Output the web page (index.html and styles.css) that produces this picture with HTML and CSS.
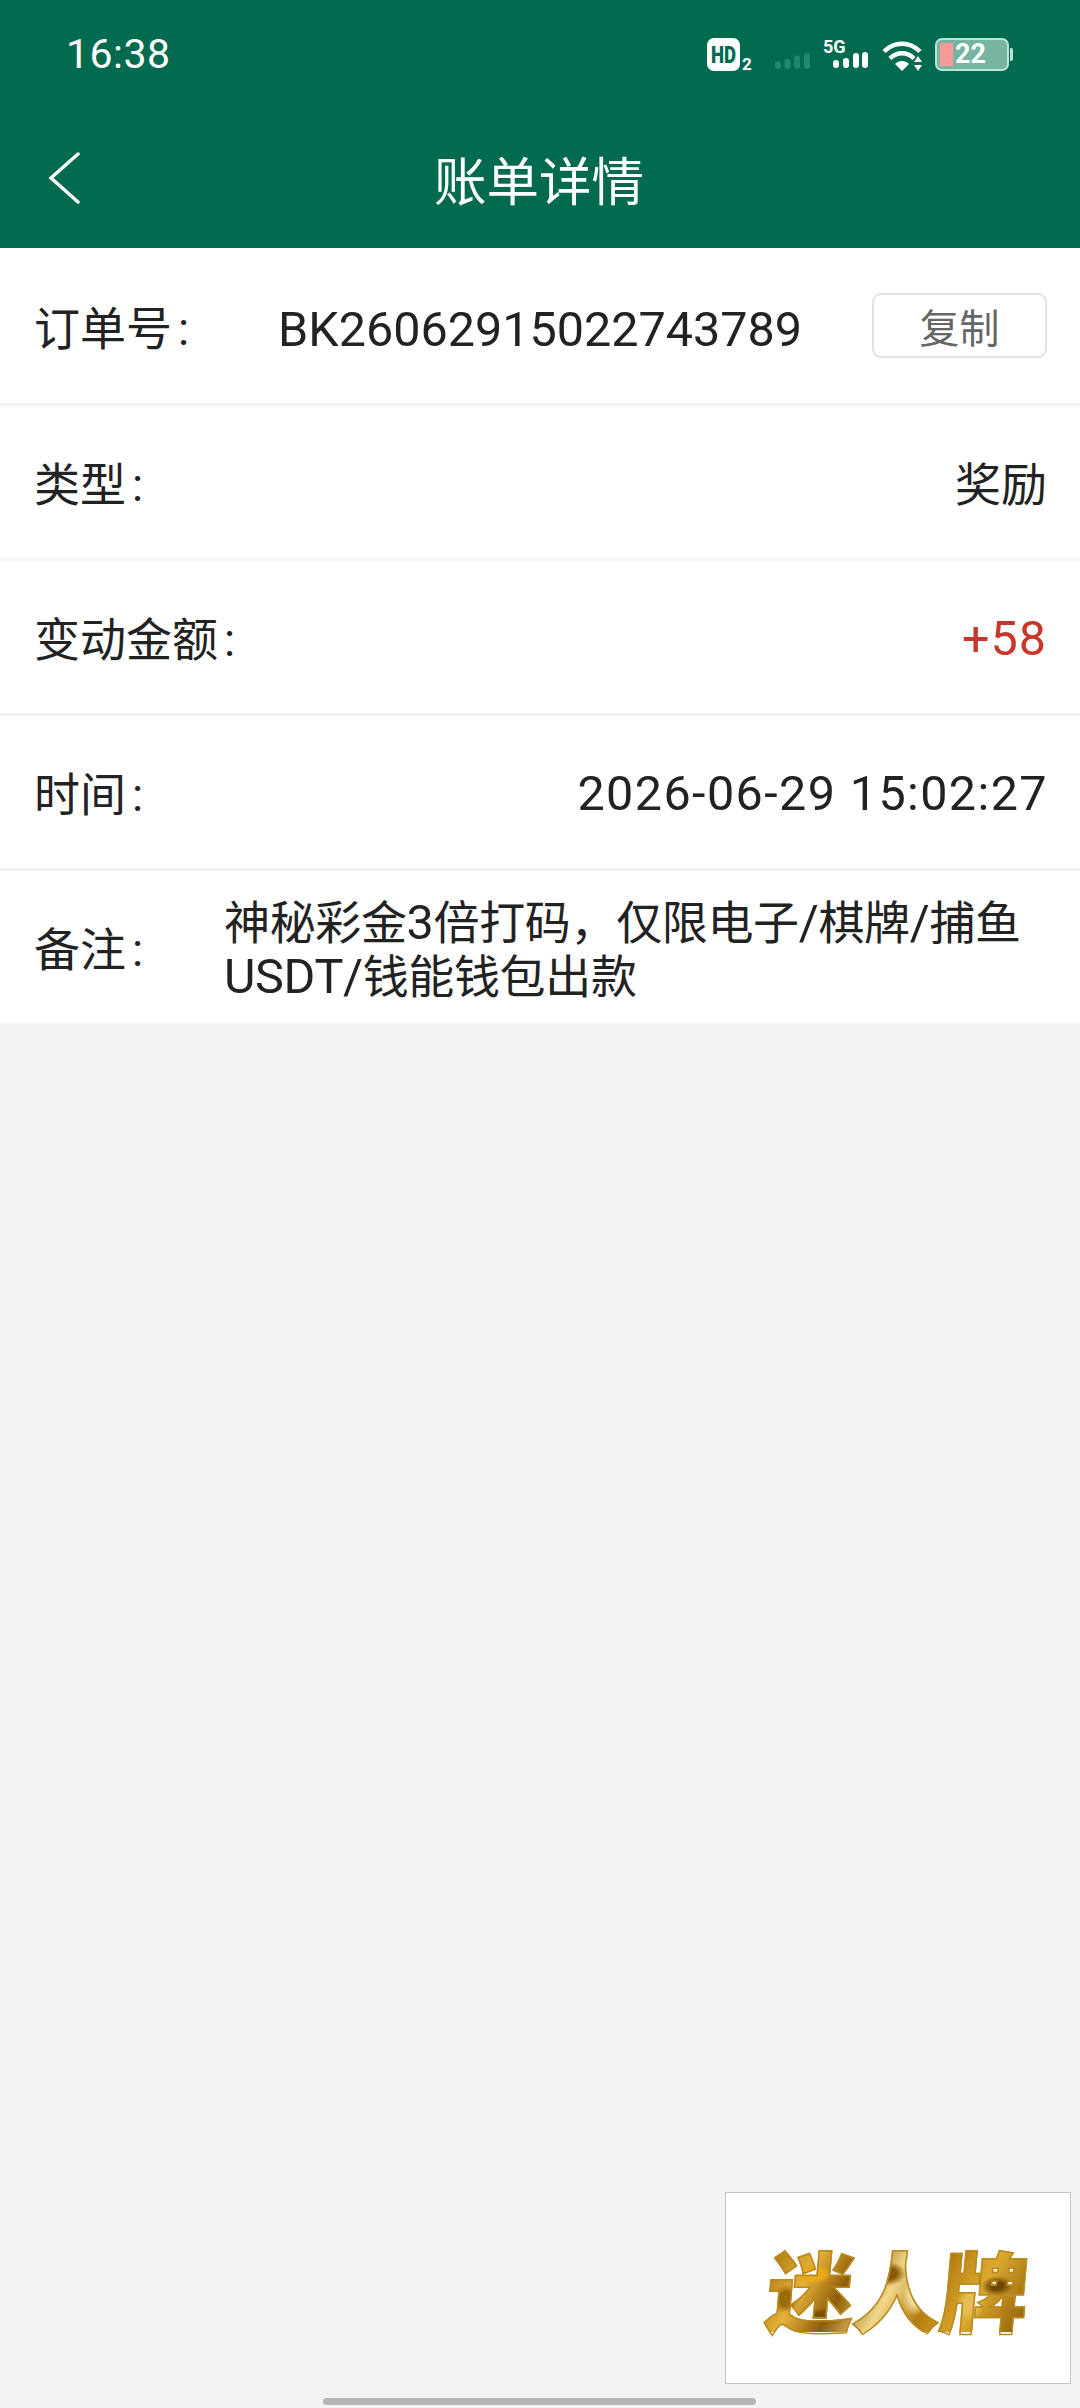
FILE: index.html
```html
<!DOCTYPE html>
<html lang="zh-CN">
<head>
<meta charset="utf-8">
<title>账单详情</title>
<link rel="stylesheet" href="styles.css">
</head>
<body>
<div class="page">
  <header class="header">
    <div class="status">
      <span class="clock">16:38</span>
      <div class="status-icons">
        <svg class="ic ic-hd" width="46" height="33" viewBox="0 0 46 33">
          <rect x="0" y="0" width="33" height="33" rx="7" fill="#fff"/>
          <text x="4" y="25" class="hd-text" textLength="25" lengthAdjust="spacingAndGlyphs">HD</text>
          <text x="35" y="32" class="hd-two">2</text>
        </svg>
        <svg class="ic ic-sig-dim" width="35" height="16" viewBox="0 0 35 16">
          <rect x="0" y="8" width="6" height="8" rx="3" fill="#1f8a6b"/>
          <rect x="9.500" y="5.500" width="6" height="10.500" rx="3" fill="#1f8a6b"/>
          <rect x="19" y="2.500" width="6" height="13.500" rx="3" fill="#1f8a6b"/>
          <rect x="29" y="0" width="6" height="16" rx="3" fill="#1f8a6b"/>
        </svg>
        <svg class="ic ic-5g" width="45" height="28" viewBox="0 0 45 28">
          <text x="0" y="13" class="five-g">5G</text>
          <rect x="10" y="20" width="6" height="8" rx="3" fill="#fff"/>
          <rect x="20" y="18" width="6" height="10" rx="3" fill="#fff"/>
          <rect x="30" y="13" width="6" height="15" rx="3" fill="#fff"/>
          <rect x="39" y="12" width="6" height="16" rx="3" fill="#fff"/>
        </svg>
        <svg class="ic ic-wifi" width="40" height="30" viewBox="0 0 40 30">
          <path d="M2 10.500C12 0 28 0 38 10.500" stroke="#fff" stroke-width="4.500" fill="none"/>
          <path d="M8 17.500C15 10.500 25 10.500 32 17.500" stroke="#fff" stroke-width="4.500" fill="none"/>
          <path d="M13 23C17 19 23 19 27 23L20 30z" fill="#fff"/>
          <path d="M36 15l4 6h-8zM36 30l-4-6h8z" fill="#fff"/>
        </svg>
        <div class="battery">
          <div class="battery-body">
            <span class="battery-low"></span>
            <span class="battery-num">22</span>
          </div>
          <span class="battery-cap"></span>
        </div>
      </div>
    </div>
    <div class="navbar">
      <svg class="back" width="33" height="54" viewBox="0 0 33 54">
        <path d="M30 2L3 26l27 24" stroke="#fff" stroke-width="3.400" fill="none" stroke-linecap="round"/>
      </svg>
      <h1 class="title">账单详情</h1>
    </div>
  </header>

  <section class="list">
    <div class="row row-first">
      <span class="label label-order">订单号<span class="colon">:</span></span>
      <span class="order-no">BK26062915022743789</span>
      <button class="copy">复制</button>
    </div>
    <div class="row">
      <span class="label">类型<span class="colon">:</span></span>
      <span class="value cjk">奖励</span>
    </div>
    <div class="row">
      <span class="label">变动金额<span class="colon">:</span></span>
      <span class="value lat amount">+58</span>
    </div>
    <div class="row">
      <span class="label">时间<span class="colon">:</span></span>
      <span class="value lat date">2026-06-29 15:02:27</span>
    </div>
    <div class="row row-note">
      <span class="label label-note">备注<span class="colon">:</span></span>
      <span class="note">神秘彩金<span class="lat">3</span>倍打码&#65292;仅限电子<span class="lat">/</span>棋牌<span class="lat">/</span>捕鱼<br><span class="lat">USDT/</span>钱能钱包出款</span>
    </div>
  </section>

  <div class="logo-box"><span class="logo-text">迷人牌</span></div>
  <div class="home-bar"></div>
</div>
</body>
</html>
```

FILE: styles.css
```css
* { box-sizing: border-box; }
html, body { margin: 0; padding: 0; }
body {
  width: 1080px;
  height: 2408px;
  overflow: hidden;
  background: #f3f3f3;
  font-family: "Roboto", "Noto Sans CJK SC", sans-serif;
  color: #222;
}
.page { position: relative; width: 1080px; height: 2408px; }

.header { height: 248px; background: #026a4e; color: #fff; display: flex; flex-direction: column; }
.status { height: 108px; padding: 31px 67px 0 66px; display: flex; justify-content: space-between; align-items: flex-start; }
.clock { font-size: 41px; line-height: 46px; font-weight: 400; letter-spacing: 0.5px; }
.status-icons { display: flex; align-items: flex-start; height: 40px; }
.ic { overflow: visible; flex: none; }
.ic-hd { margin-top: 7px; }
.ic-sig-dim { margin: 22px 0 0 22px; }
.ic-5g { margin: 9px 0 0 13px; }
.ic-wifi { margin: 10px 0 0 14px; }
.hd-text { font: 900 23px "Roboto", sans-serif; fill: #026a4e; }
.hd-two { font: 700 17px "Roboto", sans-serif; fill: #fff; }
.five-g { font: 700 18px "Roboto", sans-serif; fill: #fff; }
.battery { display: flex; align-items: center; margin: 7px 0 0 13px; }
.battery-body { width: 74px; height: 33px; padding-left: 3px; border: 2px solid #b9e4d6; border-radius: 7px; background: #76b5a1; display: flex; align-items: center; }
.battery-low { width: 13px; height: 23px; background: #fb9a99; }
.battery-num { margin-left: 2px; font: 700 27px/29px "Roboto", sans-serif; color: #fff; }
.battery-cap { width: 3px; height: 13px; background: #b9e4d6; margin-left: 1px; border-radius: 0 2px 2px 0; }

.navbar { position: relative; flex: 1; display: flex; align-items: center; justify-content: center; }
.back { position: absolute; left: 48px; top: 44px; }
.title { margin: 0 0 0 -2px; font-size: 52.500px; line-height: 60px; font-weight: 400; position: relative; top: 5px; }

.list { background: #fff; }
.row {
  height: 155px;
  padding: 0 33px 0 34px;
  display: flex;
  align-items: center;
  justify-content: space-between;
  font-size: 46px;
  border-bottom: 3px solid #f3f3f3;
}
.row-first { height: 158px; justify-content: flex-start; }
.row-note { height: 152px; border-bottom: 0; justify-content: flex-start; }
.label { white-space: nowrap; margin-bottom: 2px; }
.cjk { margin-bottom: 2px; }
.colon { margin-left: 6px; }
.label-order { width: 244px; flex: none; }
.label-note { width: 190px; flex: none; }
.lat { font-size: 48.500px; }
.value { white-space: nowrap; }
.value.lat { margin-top: 3px; }
.date { letter-spacing: 1.400px; margin-right: -1px; }
.amount { color: #c8372a; letter-spacing: 1px; }
.order-no { font-size: 48.500px; white-space: nowrap; margin-top: 8px; }
.copy {
  margin-left: auto;
  width: 175px;
  height: 65px;
  border: 2px solid #e2e2e2;
  border-radius: 9px;
  background: #fff;
  color: #666;
  font: 400 40px/1 "Roboto", "Noto Sans CJK SC", sans-serif;
  padding: 8px 0 0;
}
.note { font-size: 46px; line-height: 54px; white-space: nowrap; margin-top: 5px; letter-spacing: -0.350px; }

.logo-box {
  position: absolute;
  left: 725px;
  top: 2192px;
  width: 346px;
  height: 192px;
  background: #fff;
  border: 1.500px solid #c4c4c4;
  display: flex;
  align-items: center;
  justify-content: center;
}
.logo-text {
  font-family: "Noto Sans CJK SC", sans-serif;
  font-weight: 900;
  font-size: 88px;
  line-height: 1;
  letter-spacing: -1px;
  transform: skewX(-5deg);
  -webkit-text-stroke: 1.500px #b98a1f;
  background-color: #b57c10;
  background-image:
    radial-gradient(ellipse 20px 10px at 45px 30px, #e8a81a 60%, transparent 100%),
    radial-gradient(ellipse 14px 22px at 150px 50px, #f4dc9c 50%, transparent 100%),
    radial-gradient(ellipse 18px 12px at 120px 30px, #8a5a08 50%, transparent 100%),
    radial-gradient(ellipse 16px 10px at 230px 42px, #6f4705 40%, transparent 100%),
    radial-gradient(ellipse 14px 18px at 205px 60px, #e6bd55 50%, transparent 100%),
    radial-gradient(ellipse 22px 8px at 60px 72px, #7e5206 50%, transparent 100%),
    radial-gradient(ellipse 14px 14px at 20px 55px, #9a6a0c 50%, transparent 100%),
    linear-gradient(115deg, #a56f08 0%, #e4b23c 18%, #8f5d06 32%, #f1d78a 48%, #b57c10 62%, #dca92f 78%, #8d5c07 100%);
  -webkit-background-clip: text;
  background-clip: text;
  color: transparent;
}
.home-bar {
  position: absolute;
  left: 323px;
  bottom: 3px;
  width: 433px;
  height: 7px;
  border-radius: 4px;
  background: #b5b5b5;
}
```
